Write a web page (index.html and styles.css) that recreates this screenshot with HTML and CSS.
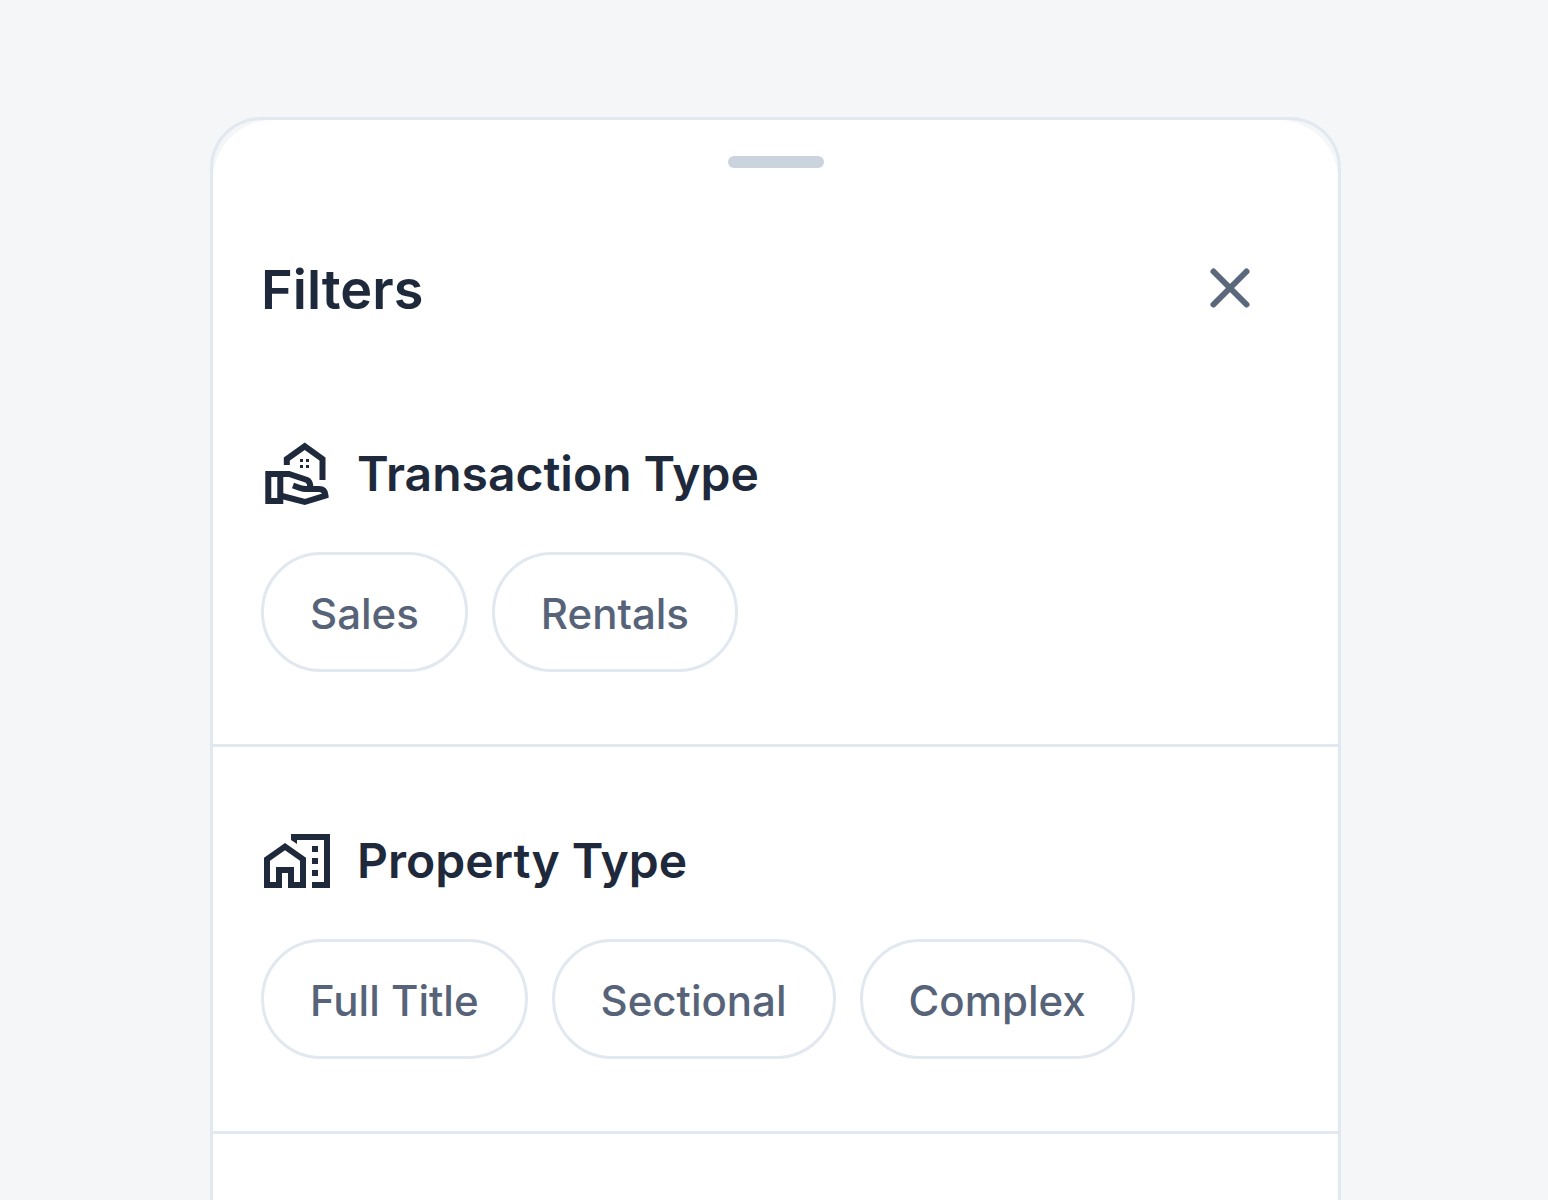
FILE: index.html
```
<!DOCTYPE html>
<html lang="en">
<head>
    <meta charset="UTF-8">
    <meta name="viewport" content="width=device-width, initial-scale=1.0">
    <title>Filters</title>
    <link rel="stylesheet" href="styles.css">
</head>
<body>
    <main class="sheet">
        <div class="sheet-content">
            <div class="handle"></div>
            <header class="sheet-header">
                <h1>Filters</h1>
                <button class="close" type="button" aria-label="Close">
                    <svg viewBox="0 0 72 72" fill="none" stroke="currentColor" stroke-width="6" stroke-linecap="round">
                        <path d="M19.5 19.5 L52.5 52.5 M52.5 19.5 L19.5 52.5"/>
                    </svg>
                </button>
            </header>

            <section class="filter-group">
                <h2>
                    <svg class="icon" viewBox="0 0 72 72" fill="none" stroke="currentColor" stroke-width="6" aria-hidden="true">
                        <path d="M25.8 27 V21 L43.7 8.3 L61.5 21 V42"/>
                        <path d="M7.3 36 H19.3 V63 H7.3 Z"/>
                        <path d="M19 36 H28 L46 42 Q49.3 43.7 49.3 49"/>
                        <path d="M32 47.5 L39 50 Q42 51 45 51 H58 Q64 51 64.5 57.5 L43.7 64 L19 57.5"/>
                        <path fill="currentColor" stroke="none" d="M39 21h3v3h-3z M45 21h3v3h-3z M39 27h3v3h-3z M45 27h3v3h-3z"/>
                    </svg>
                    Transaction Type
                </h2>
                <div class="chips">
                    <button class="chip" type="button">Sales</button>
                    <button class="chip" type="button">Rentals</button>
                </div>
            </section>

            <section class="filter-group">
                <h2>
                    <svg class="icon" viewBox="0 0 72 72" fill="currentColor" fill-rule="evenodd" aria-hidden="true">
                        <path d="M3 63 V32.7 L24 18 L45 32.7 V63 H27 V48 H21 V63 Z M9 57 H15 V42 H33 V57 H39 V35.7 L24 25.3 L9 35.7 Z"/>
                        <path d="M30 9 H69 V63 H51 V57 H63 V15 H36 V19 L30 15 Z"/>
                        <path d="M51 21h6v6h-6z M51 33h6v6h-6z M51 45h6v6h-6z"/>
                    </svg>
                    Property Type
                </h2>
                <div class="chips">
                    <button class="chip" type="button">Full Title</button>
                    <button class="chip" type="button">Sectional</button>
                    <button class="chip" type="button">Complex</button>
                </div>
            </section>
        </div>
    </main>
</body>
</html>
```
FILE: styles.css
```
* {
    box-sizing: border-box;
}

body {
    display: flex;
    flex-direction: column;
    min-height: 100vh;
    margin: 0;
    padding: 117px 207px 0 210px;
    background-color: #f4f6f8;
    color: #1e293b;
    font-family: Inter, "Liberation Sans", sans-serif;
}

.sheet {
    display: flex;
    flex-direction: column;
    flex: 1;
    border: 3px solid #e2e8f0;
    border-bottom: none;
    border-radius: 51px 51px 0 0;
}

.sheet-content {
    flex: 1;
    padding-top: 36px;
    background-color: #fff;
    border-radius: 60px 60px 0 0;
}

.handle {
    width: 96px;
    height: 12px;
    margin: 0 auto;
    border-radius: 6px;
    background-color: #cbd3df;
}

.sheet-header {
    display: flex;
    justify-content: space-between;
    align-items: flex-start;
    padding: 84px 72px 32px 48px;
}

h1, h2 {
    margin: 0;
    font-weight: 600;
}

h1 {
    font-size: 54px;
    line-height: 76px;
}

h2 {
    display: flex;
    align-items: center;
    gap: 24px;
    font-size: 48px;
    line-height: 72px;
}

.icon {
    flex: none;
    width: 72px;
    height: 72px;
}

.close {
    width: 72px;
    height: 72px;
    padding: 0;
    border: none;
    background: none;
    color: #5b677a;
    cursor: pointer;
}

.close svg {
    display: block;
}

.filter-group {
    padding: 78px 48px 72px;
    border-bottom: 3px solid #e2e8f0;
}

.chips {
    display: flex;
    flex-wrap: wrap;
    gap: 24px;
    margin-top: 42px;
}

.chip {
    height: 120px;
    padding: 2px 46px 0;
    border: 3px solid #e2e8f0;
    border-radius: 60px;
    background-color: #fff;
    color: #566378;
    font-family: inherit;
    font-size: 42px;
    font-weight: 500;
    cursor: pointer;
}

.chip:hover {
    background-color: #f4f6f8;
}

/* Smaller screens */
@media (max-width: 1100px) {
    body {
        padding: 48px 24px 0;
    }
}
```
